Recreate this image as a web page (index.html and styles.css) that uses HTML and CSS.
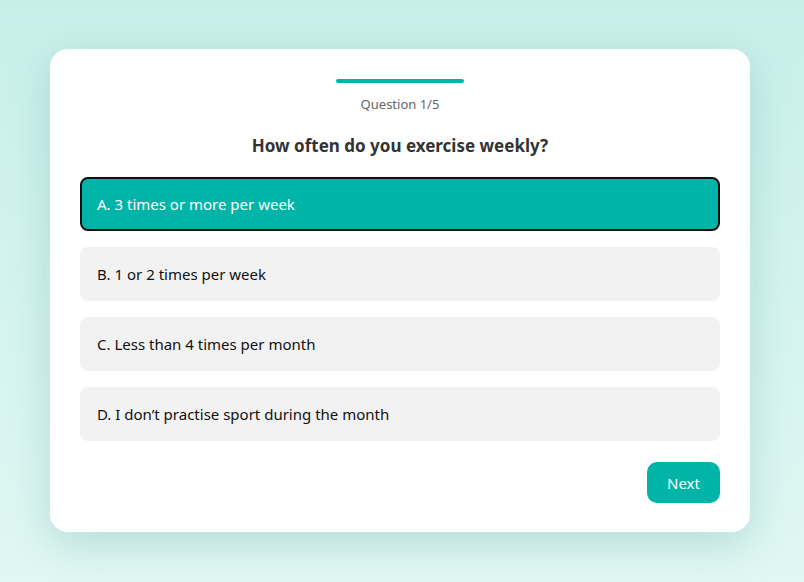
FILE: index.html
```html
<!DOCTYPE html>
<html lang="en">
<head>
<meta charset="utf-8">
<title>Quiz</title>
<link rel="stylesheet" href="styles.css">
</head>
<body>
<main class="card">
  <div class="progress"></div>
  <p class="counter">Question 1/5</p>
  <h1 class="question">How often do you exercise weekly?</h1>
  <ul class="options">
    <li class="option selected">A. 3 times or more per week</li>
    <li class="option">B. 1 or 2 times per week</li>
    <li class="option">C. Less than 4 times per month</li>
    <li class="option">D. I don’t practise sport during the month</li>
  </ul>
  <div class="actions">
    <button class="next">Next</button>
  </div>
</main>
</body>
</html>
```
FILE: styles.css
```css
html, body {
  margin: 0;
  padding: 0;
  height: 100%;
}
body {
  background: linear-gradient(180deg, #c7efea 0%, #e0f7f3 100%);
  font-family: "Noto Sans", "Open Sans", sans-serif;
  padding: 49px 0 0 50px;
  box-sizing: border-box;
}
.card {
  width: 700px;
  height: 483px;
  box-sizing: border-box;
  background: #fff;
  border-radius: 18px;
  padding: 30px 30px 28px;
  box-shadow: 0 12px 40px rgba(0, 110, 100, 0.18);
  display: flex;
  flex-direction: column;
}
.progress {
  width: 128px;
  height: 4px;
  border-radius: 2px;
  background: #00b4a8;
  align-self: center;
}
.counter {
  margin: 12px 0 0;
  text-align: center;
  font-size: 13px;
  color: #666;
  line-height: 18px;
}
.question {
  margin: 21px 0 0;
  text-align: center;
  font-size: 17px;
  font-weight: 700;
  color: #333;
  line-height: 24px;
}
.options {
  list-style: none;
  margin: 19px 0 0;
  padding: 0;
  display: flex;
  flex-direction: column;
  gap: 16px;
}
.option {
  height: 54px;
  box-sizing: border-box;
  padding: 0 17px;
  display: flex;
  align-items: center;
  background: #f2f2f2;
  border-radius: 8px;
  font-size: 15px;
  color: #111;
}
.option.selected {
  background: #00b4a8;
  color: #fff;
  border: 2px solid #111;
  padding: 0 15px;
}
.actions {
  margin-top: 21px;
  display: flex;
  justify-content: flex-end;
}
.next {
  width: 73px;
  height: 41px;
  border: none;
  border-radius: 10px;
  background: #00b4a8;
  color: #fff;
  font-family: inherit;
  font-size: 15px;
}
```
